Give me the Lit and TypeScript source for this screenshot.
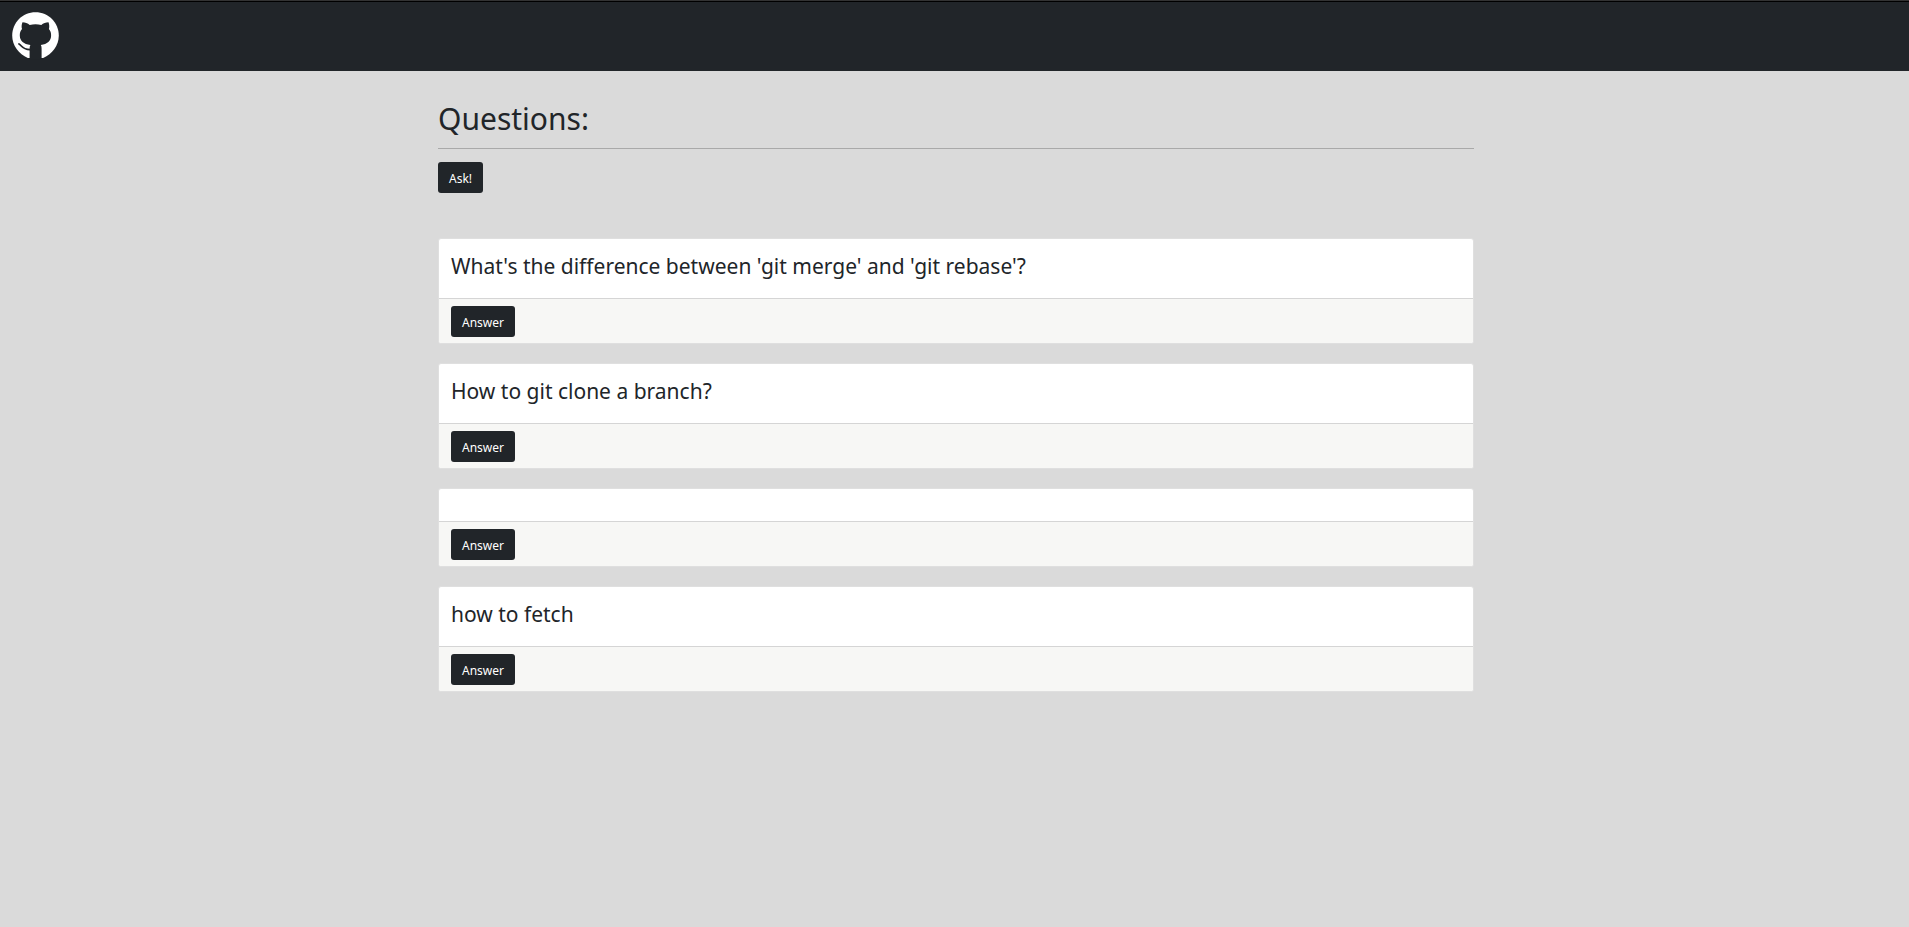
import { LitElement, html, css } from "lit";
import { customElement, property } from "lit/decorators.js";

@customElement("question-card")
class QuestionCard extends LitElement {
  @property() question = "";

  static styles = css`
    :host {
      display: block;
      border: 1px solid #dfdfdf;
      border-radius: 3px;
      background: #fff;
      overflow: hidden;
    }
    .body {
      padding: 16px 12px;
    }
    .title {
      margin: 0;
      padding-bottom: 5px;
      font-size: 21px;
      font-weight: 400;
      line-height: 22px;
    }
    .footer {
      display: flex;
      padding: 7px 12px 6px;
      border-top: 1px solid #d5d5d5;
      background: #f7f7f5;
    }
    .button {
      padding: 2px 11px 0;
      border: 0;
      border-radius: 3px;
      background: #212529;
      color: #fff;
      font: 12px/29px "Noto Sans", sans-serif;
      cursor: pointer;
    }
  `;

  render() {
    return html`
      <div class="body">
        ${this.question ? html`<h2 class="title">${this.question}</h2>` : null}
      </div>
      <div class="footer"><button class="button" type="button">Answer</button></div>
    `;
  }
}

@customElement("app-root")
class AppRoot extends LitElement {
  static styles = css`
    :host {
      display: block;
      min-height: 100vh;
      background: #dadada;
      color: #212529;
      font-family: "Noto Sans", sans-serif;
    }
    .navbar {
      display: flex;
      padding: 11px 12px;
      border-top: 1px solid #333;
      box-shadow: inset 0 1px #000;
      background: #212529;
    }
    .logo {
      display: block;
      width: 48px;
      height: 48px;
    }
    .container {
      max-width: 1036px;
      margin: 0 auto;
      padding: 28px 10px 28px 13px;
    }
    .heading {
      margin: 0;
      padding-bottom: 10px;
      border-bottom: 1px solid #a9a9a9;
      font-size: 30px;
      font-weight: 400;
      line-height: 39px;
    }
    .ask {
      margin: 13px 0 45px;
      padding: 2px 11px 0;
      border: 0;
      border-radius: 3px;
      background: #212529;
      color: #fff;
      font: 12px/29px "Noto Sans", sans-serif;
      cursor: pointer;
    }
    .list {
      display: grid;
      gap: 19px;
    }
  `;

  private questions = [
    "What's the difference between 'git merge' and 'git rebase'?",
    "How to git clone a branch?",
    "",
    "how to fetch",
  ];

  render() {
    return html`
      <header class="navbar">
        <a href="#" aria-label="Home">
          <svg class="logo" viewBox="0 0 48 48" aria-hidden="true">
            <path
              fill="#fff"
              d="M23.5.3C10.500.3.2 10.800.2 23.600c0 10 6.600 18.800 15.600 22.400h15.400c9-3.600 15.600-12.400 15.600-22.400C46.800 10.800 36.500.3 23.500.3z"
            />
            <path
              fill="#212529"
              d="M10.500 10.300c2.600 0 5.200 1.200 7.200 2.600 3.600-.8 8-.8 11.600 0 2-1.400 4.600-2.600 7.200-2.600.9 2.300 1 4.700.4 6.800 1.600 1.900 2.300 4.100 2.200 6.700-.2 5.300-3.700 8.400-10.300 9.300.6 1 .8 2 .8 3.300v11H17.600V36.400c0-1.300.3-2.300.8-3.300-6.700-.9-10.400-4-10.600-9.300-.1-2.600.6-4.800 2.200-6.700-.6-2.100-.5-4.500.5-6.800z"
            />
            <path
              fill="none"
              stroke="#212529"
              stroke-width="1.800"
              stroke-linecap="round"
              d="M7 32c2.600 1.200 3.200 5.900 11.500 5.600"
            />
          </svg>
        </a>
      </header>
      <main class="container">
        <h1 class="heading">Questions:</h1>
        <button class="ask" type="button">Ask!</button>
        <section class="list">
          ${this.questions.map((q) => html`<question-card .question=${q}></question-card>`)}
        </section>
      </main>
    `;
  }
}
